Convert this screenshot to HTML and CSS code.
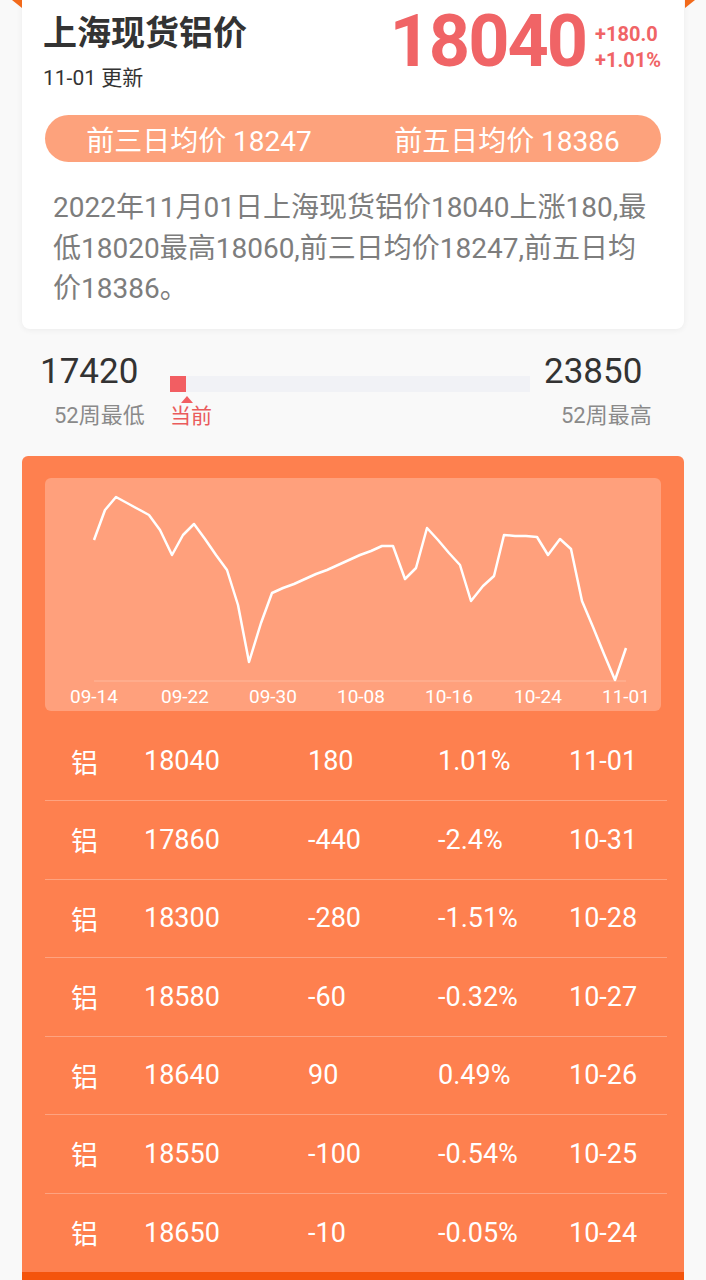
FILE: index.html
```html
<!DOCTYPE html>
<html lang="zh-CN">
<head>
<meta charset="UTF-8">
<meta name="viewport" content="width=device-width, initial-scale=1.0">
<title>上海现货铝价</title>
<link rel="stylesheet" href="styles.css">
</head>
<body>
    <div class="folds">
        <svg width="10" height="8" viewBox="0 0 10 8"><polygon points="0,0 10,0 10,8" fill="#f26a1b"/></svg>
        <svg width="10" height="8" viewBox="0 0 10 8"><polygon points="0,0 10,0 0,8" fill="#f26a1b"/></svg>
    </div>

    <section class="quote-card">
        <div class="quote-head">
            <div class="quote-title">
                <h1>上海现货铝价</h1>
                <p class="quote-date">11-01 更新</p>
            </div>
            <div class="quote-price">
                <span class="price-now">18040</span>
                <div class="price-change">
                    <span>+180.0</span>
                    <span>+1.01%</span>
                </div>
            </div>
        </div>
        <div class="avg-pill">
            <span>前三日均价 18247</span>
            <span>前五日均价 18386</span>
        </div>
        <p class="quote-desc">2022年11月01日上海现货铝价18040上涨180,最低18020最高18060,前三日均价18247,前五日均价18386。</p>
    </section>

    <section class="range">
        <div class="range-num">17420</div>
        <div class="range-track"><div class="range-fill"></div></div>
        <div class="range-num is-high">23850</div>
        <div class="range-label">52周最低</div>
        <div class="range-now">
            <div class="range-caret"></div>
            当前
        </div>
        <div class="range-label is-high">52周最高</div>
    </section>

    <section class="history">
        <div class="chart">
            <svg width="616" height="233" viewBox="45 477 616 233">
                <line x1="94" y1="680" x2="626" y2="680" stroke="rgba(255,255,255,0.25)" stroke-width="1"/>
                <polyline fill="none" stroke="#fff" stroke-width="2.5" stroke-linejoin="round"
                    points="94,539 105,509 116,496 127,502 138,508 149,514 160,529 172,554 183,534 194,523 205,538 216,554 227,569 238,604 249,661 261,622 272,592 283,587 294,583 305,578 316,573 327,569 338,564 349,559 360,554 371,550 382,545 393,545 405,578 416,567 427,527 438,539 449,552 460,564 471,600 483,585 494,575 504,534 515,535 526,535 537,536 548,554 560,538 571,548 582,600 593,626 604,653 615,679 626,647"/>
                <g class="chart-axis">
                    <text x="94" y="702">09-14</text>
                    <text x="185" y="702">09-22</text>
                    <text x="273" y="702">09-30</text>
                    <text x="361" y="702">10-08</text>
                    <text x="449" y="702">10-16</text>
                    <text x="538" y="702">10-24</text>
                    <text x="626" y="702">11-01</text>
                </g>
            </svg>
        </div>

        <div class="history-list">
            <div class="history-row"><span>铝</span><span>18040</span><span>180</span><span>1.01%</span><span>11-01</span></div>
            <div class="history-row"><span>铝</span><span>17860</span><span>-440</span><span>-2.4%</span><span>10-31</span></div>
            <div class="history-row"><span>铝</span><span>18300</span><span>-280</span><span>-1.51%</span><span>10-28</span></div>
            <div class="history-row"><span>铝</span><span>18580</span><span>-60</span><span>-0.32%</span><span>10-27</span></div>
            <div class="history-row"><span>铝</span><span>18640</span><span>90</span><span>0.49%</span><span>10-26</span></div>
            <div class="history-row"><span>铝</span><span>18550</span><span>-100</span><span>-0.54%</span><span>10-25</span></div>
            <div class="history-row"><span>铝</span><span>18650</span><span>-10</span><span>-0.05%</span><span>10-24</span></div>
        </div>
        <div class="history-foot"></div>
    </section>
</body>
</html>
```

FILE: styles.css
```css
body {
    margin: 0;
    background-color: #f9f9f9;
    font-family: Roboto, "Noto Sans CJK SC", sans-serif;
}

.folds {
    display: flex;
    justify-content: space-between;
    height: 8px;
    margin-bottom: -8px;
    padding: 0 11px 0 12px;
    position: relative;
    z-index: 1;
}

/* top summary card */
.quote-card {
    margin: 0 22px;
    padding: 6px 23px 19px;
    background-color: #fff;
    border-radius: 0 0 8px 8px;
    box-shadow: 0 1px 6px rgba(0, 0, 0, 0.06);
}

.quote-head {
    display: flex;
    justify-content: space-between;
    align-items: flex-start;
}

.quote-title h1 {
    margin: 7px 0 0 -2px;
    font-size: 34px;
    line-height: 40px;
    font-weight: bold;
    color: #333;
}

.quote-date {
    margin: 12px 0 0 -2px;
    font-size: 21px;
    line-height: 26px;
    color: #333;
}

.quote-price {
    display: flex;
    align-items: flex-start;
    gap: 9px;
}

.price-now {
    font-size: 72px;
    line-height: 72px;
    font-weight: bold;
    letter-spacing: -2px;
    color: #f06466;
}

.price-change {
    display: flex;
    flex-direction: column;
    margin-top: 15px;
    font-size: 20px;
    line-height: 26px;
    font-weight: bold;
    color: #f06466;
}

.avg-pill {
    display: flex;
    align-items: center;
    height: 47px;
    margin-top: 24px;
    border-radius: 24px;
    background-color: #fda27c;
    color: #fff;
    font-size: 28px;
}

.avg-pill span {
    flex: 1;
    text-align: center;
}

.quote-desc {
    margin: 26px 0 0 8px;
    font-size: 28px;
    line-height: 40.5px;
    color: #7d7d7d;
}

/* 52 week range */
.range {
    display: grid;
    grid-template-columns: 148px 360px 1fr;
    margin: 23px 22px 0;
}

.range-num {
    padding-left: 18px;
    font-size: 35px;
    line-height: 40px;
    color: #333;
}

.range-num.is-high {
    padding-left: 14px;
}

.range-track {
    align-self: end;
    height: 16px;
    background-color: #f1f2f6;
}

.range-fill {
    width: 16px;
    height: 100%;
    background-color: #f25e62;
}

.range-label {
    margin-top: 11px;
    padding-left: 32px;
    font-size: 22px;
    line-height: 26px;
    color: #8a8a8a;
}

.range-label.is-high {
    padding-left: 31px;
}

.range-now {
    margin-top: 4px;
    font-size: 21px;
    line-height: 26px;
    color: #ea5b5c;
}

.range-caret {
    width: 0;
    height: 0;
    margin-left: 11px;
    border-left: 6px solid transparent;
    border-right: 6px solid transparent;
    border-bottom: 7px solid #f25e62;
}

/* orange history panel */
.history {
    margin: 27px 22px 0;
    padding: 22px 23px 0;
    background-color: #fe804f;
    border-radius: 6px 6px 0 0;
}

.chart {
    height: 233px;
    background-color: #ffa07c;
    border-radius: 6px;
}

.chart svg {
    display: block;
}

.chart-axis text {
    font-size: 19px;
    fill: #fff;
    text-anchor: middle;
}

.history-list {
    padding-top: 12px;
    margin-right: -6px;
}

.history-row {
    display: grid;
    grid-template-columns: 73px 164px 130px 131px 1fr;
    align-items: center;
    height: 78.5px;
    padding-left: 26px;
    box-sizing: border-box;
    border-bottom: 1px solid rgba(255, 255, 255, 0.28);
    font-size: 27px;
    color: #fff;
}

.history-row:last-child {
    border-bottom: none;
}

.history-foot {
    height: 20px;
    margin: 0 -23px;
    background-color: #f4540c;
}
```
